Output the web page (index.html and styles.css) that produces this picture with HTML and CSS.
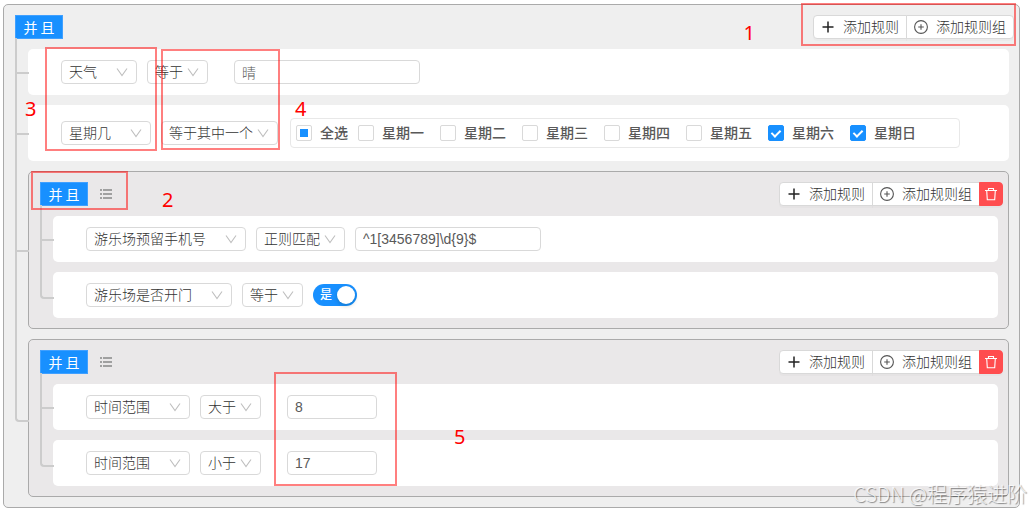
FILE: index.html
```html
<!DOCTYPE html>
<html lang="zh-CN">
  <head>
    <title>规则</title>
    <meta charset="utf-8" />
    <meta name="viewport" content="width=device-width, initial-scale=1.0" />
    <link rel="stylesheet" href="styles.css">
  </head>

  <body>
    <!-- shared icons -->
    <svg class="sprite" aria-hidden="true">
      <symbol id="down" viewBox="0 0 12 12">
        <path d="M1 2.5 L6 9.5 L11 2.5" fill="none" stroke="currentColor" stroke-width="1.1" />
      </symbol>
      <symbol id="plus" viewBox="0 0 14 14">
        <path d="M7 1.5 V12.5 M1.5 7 H12.5" fill="none" stroke="currentColor" stroke-width="1.5" />
      </symbol>
      <symbol id="plus-circle" viewBox="0 0 14 14">
        <circle cx="7" cy="7" r="6.4" fill="none" stroke="currentColor" stroke-width="1.1" />
        <path d="M7 4.2 V9.8 M4.2 7 H9.8" fill="none" stroke="currentColor" stroke-width="1.1" />
      </symbol>
      <symbol id="trash" viewBox="0 0 14 14">
        <path d="M1 3.5 H13 M4.5 3.5 V1.5 H9.5 V3.5 M2.7 3.5 L3.3 12.8 H10.7 L11.3 3.5" fill="none" stroke="currentColor" stroke-width="1.1" />
      </symbol>
      <symbol id="list" viewBox="0 0 12 12">
        <path d="M3 2 H12 M3 6 H12 M3 10 H12 M0 2 H2 M0 6 H2 M0 10 H2" fill="none" stroke="currentColor" stroke-width="1.6" />
      </symbol>
    </svg>

    <div class="page">
      <section class="group root">
        <div class="header">
          <button class="logic">并 且</button>
          <div class="actions">
            <button class="btn"><svg><use href="#plus" /></svg>添加规则</button>
            <button class="btn"><svg class="thin"><use href="#plus-circle" /></svg>添加规则组</button>
          </div>
        </div>
        <ul class="children">
          <li>
            <div class="rule">
              <div class="select"><select aria-label="字段"><option>天气</option></select><svg><use href="#down" /></svg></div>
              <div class="select op"><select aria-label="条件"><option>等于</option></select><svg><use href="#down" /></svg></div>
              <input class="text spaced" type="text" value="晴" aria-label="值" />
            </div>
          </li>
          <li>
            <div class="rule">
              <div class="select"><select aria-label="字段"><option>星期几</option></select><svg><use href="#down" /></svg></div>
              <div class="select op"><select aria-label="条件"><option>等于其中一个</option></select><svg><use href="#down" /></svg></div>
              <div class="checks">
                <label class="all"><input type="checkbox" id="checkAll" />全选</label>
                <label><input type="checkbox" />星期一</label>
                <label><input type="checkbox" />星期二</label>
                <label><input type="checkbox" />星期三</label>
                <label><input type="checkbox" />星期四</label>
                <label><input type="checkbox" />星期五</label>
                <label><input type="checkbox" checked />星期六</label>
                <label><input type="checkbox" checked />星期日</label>
              </div>
            </div>
          </li>
          <li>
            <section class="group">
              <div class="header">
                <button class="logic">并 且</button>
                <button class="sort" aria-label="排序"><svg><use href="#list" /></svg></button>
                <div class="actions">
                  <button class="btn"><svg><use href="#plus" /></svg>添加规则</button>
                  <button class="btn"><svg class="thin"><use href="#plus-circle" /></svg>添加规则组</button>
                  <button class="btn danger" aria-label="删除"><svg><use href="#trash" /></svg></button>
                </div>
              </div>
              <ul class="children">
                <li>
                  <div class="rule">
                    <div class="select"><select aria-label="字段"><option>游乐场预留手机号</option></select><svg><use href="#down" /></svg></div>
                    <div class="select op"><select aria-label="条件"><option>正则匹配</option></select><svg><use href="#down" /></svg></div>
                    <input class="text" type="text" value="^1[3456789]\d{9}$" aria-label="值" />
                  </div>
                </li>
                <li>
                  <div class="rule">
                    <div class="select"><select aria-label="字段"><option>游乐场是否开门</option></select><svg><use href="#down" /></svg></div>
                    <div class="select op"><select aria-label="条件"><option>等于</option></select><svg><use href="#down" /></svg></div>
                    <label class="switch"><input type="checkbox" role="switch" checked /><span>是</span></label>
                  </div>
                </li>
              </ul>
            </section>
          </li>
          <li>
            <section class="group">
              <div class="header">
                <button class="logic">并 且</button>
                <button class="sort" aria-label="排序"><svg><use href="#list" /></svg></button>
                <div class="actions">
                  <button class="btn"><svg><use href="#plus" /></svg>添加规则</button>
                  <button class="btn"><svg class="thin"><use href="#plus-circle" /></svg>添加规则组</button>
                  <button class="btn danger" aria-label="删除"><svg><use href="#trash" /></svg></button>
                </div>
              </div>
              <ul class="children">
                <li>
                  <div class="rule">
                    <div class="select"><select aria-label="字段"><option>时间范围</option></select><svg><use href="#down" /></svg></div>
                    <div class="select op"><select aria-label="条件"><option>大于</option></select><svg><use href="#down" /></svg></div>
                    <input class="text number spaced" type="text" value="8" aria-label="值" />
                  </div>
                </li>
                <li>
                  <div class="rule">
                    <div class="select"><select aria-label="字段"><option>时间范围</option></select><svg><use href="#down" /></svg></div>
                    <div class="select op"><select aria-label="条件"><option>小于</option></select><svg><use href="#down" /></svg></div>
                    <input class="text number spaced" type="text" value="17" aria-label="值" />
                  </div>
                </li>
              </ul>
            </section>
          </li>
        </ul>
      </section>

      <!-- numbered callouts -->
      <div class="mark mark-add"></div>
      <div class="mark mark-logic"></div>
      <div class="mark mark-field"></div>
      <div class="mark mark-op"></div>
      <div class="mark mark-value"></div>
      <span class="num num-1">1</span>
      <span class="num num-2">2</span>
      <span class="num num-3">3</span>
      <span class="num num-4">4</span>
      <span class="num num-5">5</span>
      <span class="watermark">CSDN @程序猿进阶</span>
    </div>

    <script>
      document.getElementById("checkAll").indeterminate = true;
    </script>
  </body>
</html>
```

FILE: styles.css
```css
*,
*::before,
*::after {
  box-sizing: border-box;
}

body {
  margin: 0;
  background-color: #fff;
  color: #595959;
  font-family: "Liberation Sans", "Noto Sans CJK SC", sans-serif;
  font-size: 14px;
  font-weight: 300;
  line-height: 22px;
}

button,
input,
select {
  margin: 0;
  font: inherit;
  color: inherit;
}

button {
  cursor: pointer;
}

.sprite {
  display: none;
}

.page {
  position: relative;
  padding: 4px 11px 4px 3px;
}

/* groups */
.group {
  padding: 10px 10px 10px 11px;
  border: 1px solid #aaa;
  border-radius: 5px;
  background-color: #eae8e9;
}

.group.root {
  background-color: #efefef;
}

.header {
  display: flex;
  align-items: center;
  height: 24px;
  margin-right: -5px;
}

.logic {
  min-width: 48px;
  height: 24px;
  padding: 0 7px;
  border: 1px solid #40a0ff;
  background-color: #1890ff;
  color: #fff;
  font-family: "Noto Sans CJK SC", sans-serif;
  font-weight: 400;
  line-height: 20px;
}

.sort {
  display: flex;
  margin-left: 12px;
  padding: 0;
  border: none;
  background: none;
  color: #888;
}

.sort svg {
  width: 12px;
  height: 12px;
}

.actions {
  display: flex;
  margin-left: auto;
}

.btn {
  display: flex;
  align-items: center;
  gap: 8px;
  height: 24px;
  padding: 0 7px;
  border: 1px solid #d9d9d9;
  background-color: #fff;
  box-shadow: 0 2px 0 rgba(0, 0, 0, 0.02);
  color: #333;
  white-space: nowrap;
}

.btn + .btn {
  margin-left: -1px;
}

.btn:first-child {
  border-radius: 4px 0 0 4px;
}

.btn:last-child {
  border-radius: 0 4px 4px 0;
}

.btn svg {
  width: 14px;
  height: 14px;
  color: #222;
}

.btn svg.thin {
  color: #555;
}

.btn.danger {
  padding: 0 4px;
  border-color: #ff4d4f;
  background-color: #ff4d4f;
}

.btn.danger svg {
  color: #fff;
}

/* tree */
.children {
  display: flex;
  flex-direction: column;
  gap: 10px;
  margin: 10px 0 0;
  padding: 0 0 0 13px;
  list-style: none;
}

.children > li {
  position: relative;
}

.children > li::before,
.children > li:not(:last-child)::after {
  content: "";
  position: absolute;
  left: -13px;
  top: -11px;
  border-left: 2px solid #ccc;
}

.children > li::before {
  width: 14px;
  height: calc(50% + 13px);
  border-bottom: 2px solid #ccc;
}

.children > li:not(:last-child)::after {
  height: calc(100% + 11px);
}

.children > li:last-child::before {
  height: calc(50% + 15px);
  border-bottom-left-radius: 4px;
}

.rule {
  display: flex;
  align-items: center;
  gap: 10px;
  min-height: 46px;
  padding: 11px 33px;
  border-radius: 5px;
  background-color: #fff;
}

/* controls */
.select {
  position: relative;
  display: flex;
}

.select select {
  appearance: none;
  height: 24px;
  padding: 0 39px 0 7px;
  border: 1px solid #d9d9d9;
  border-radius: 4px;
  background-color: #fff;
  color: #333;
}

.select.op select {
  padding-right: 24px;
}

.select svg {
  position: absolute;
  top: 6px;
  right: 9px;
  width: 12px;
  height: 12px;
  color: #bfbfbf;
  pointer-events: none;
}

.text {
  width: 186px;
  height: 24px;
  padding: 0 7px;
  border: 1px solid #d9d9d9;
  border-radius: 4px;
  background-color: #fff;
}

.text.number {
  width: 90px;
}

.text.spaced {
  margin-left: 16px;
}

.checks {
  display: flex;
  align-items: center;
  gap: 16px;
  flex: 0 1 670px;
  height: 30px;
  margin: 2px;
  padding: 0 5px;
  border: 1px solid #e8e8e8;
  border-radius: 4px;
  font-weight: 500;
}

.checks label {
  display: flex;
  align-items: center;
  gap: 8px;
  line-height: 16px;
  white-space: nowrap;
}

.checks .all {
  margin-right: -6px;
}

.checks input {
  appearance: none;
  display: grid;
  place-items: center;
  width: 16px;
  height: 16px;
  border: 1px solid #d9d9d9;
  border-radius: 2px;
  background-color: #fff;
}

.checks input:checked {
  border-color: #1890ff;
  background-color: #1890ff;
}

.checks input:checked::after {
  content: "";
  width: 6px;
  height: 9px;
  margin-bottom: 2px;
  border: solid #fff;
  border-width: 0 2px 2px 0;
  transform: rotate(45deg);
}

.checks input:indeterminate::after {
  content: "";
  width: 8px;
  height: 8px;
  background-color: #1890ff;
}

.switch {
  position: relative;
  display: flex;
  align-items: center;
}

.switch input {
  appearance: none;
  width: 44px;
  height: 22px;
  border-radius: 11px;
  background-color: #1890ff;
}

.switch input::after {
  content: "";
  display: block;
  width: 18px;
  height: 18px;
  margin: 2px 2px 2px auto;
  border-radius: 9px;
  background-color: #fff;
  box-shadow: 0 2px 4px rgba(0, 35, 11, 0.2);
}

.switch span {
  position: absolute;
  left: 7px;
  color: #fff;
  font-size: 12px;
  font-weight: 500;
}

/* callouts */
.mark {
  position: absolute;
  border: 2px solid rgba(255, 0, 0, 0.5);
  pointer-events: none;
}

.mark-add {
  top: 3px;
  right: 15px;
  width: 215px;
  height: 43px;
}

.mark-logic {
  top: 171px;
  left: 31px;
  width: 97px;
  height: 39px;
}

.mark-field {
  top: 47px;
  left: 45px;
  width: 112px;
  height: 104px;
}

.mark-op {
  top: 49px;
  left: 161px;
  width: 119px;
  height: 101px;
}

.mark-value {
  top: 372px;
  left: 274px;
  width: 123px;
  height: 114px;
}

.num {
  position: absolute;
  color: #f00;
  font-family: "Noto Sans", sans-serif;
  font-size: 20px;
  font-weight: 400;
  line-height: 24px;
}

.num-1 {
  top: 21px;
  right: 276px;
}

.num-2 {
  top: 188px;
  left: 162px;
}

.num-3 {
  top: 97px;
  left: 25px;
}

.num-4 {
  top: 97px;
  left: 295px;
}

.num-5 {
  top: 425px;
  left: 454px;
}

.watermark {
  position: absolute;
  right: 4px;
  bottom: 6px;
  color: rgba(255, 255, 255, 0.8);
  font-family: "Noto Sans CJK SC", sans-serif;
  font-size: 20px;
  line-height: 24px;
  text-shadow: 1px 1px 1px rgba(0, 0, 0, 0.45);
  white-space: nowrap;
}
```
